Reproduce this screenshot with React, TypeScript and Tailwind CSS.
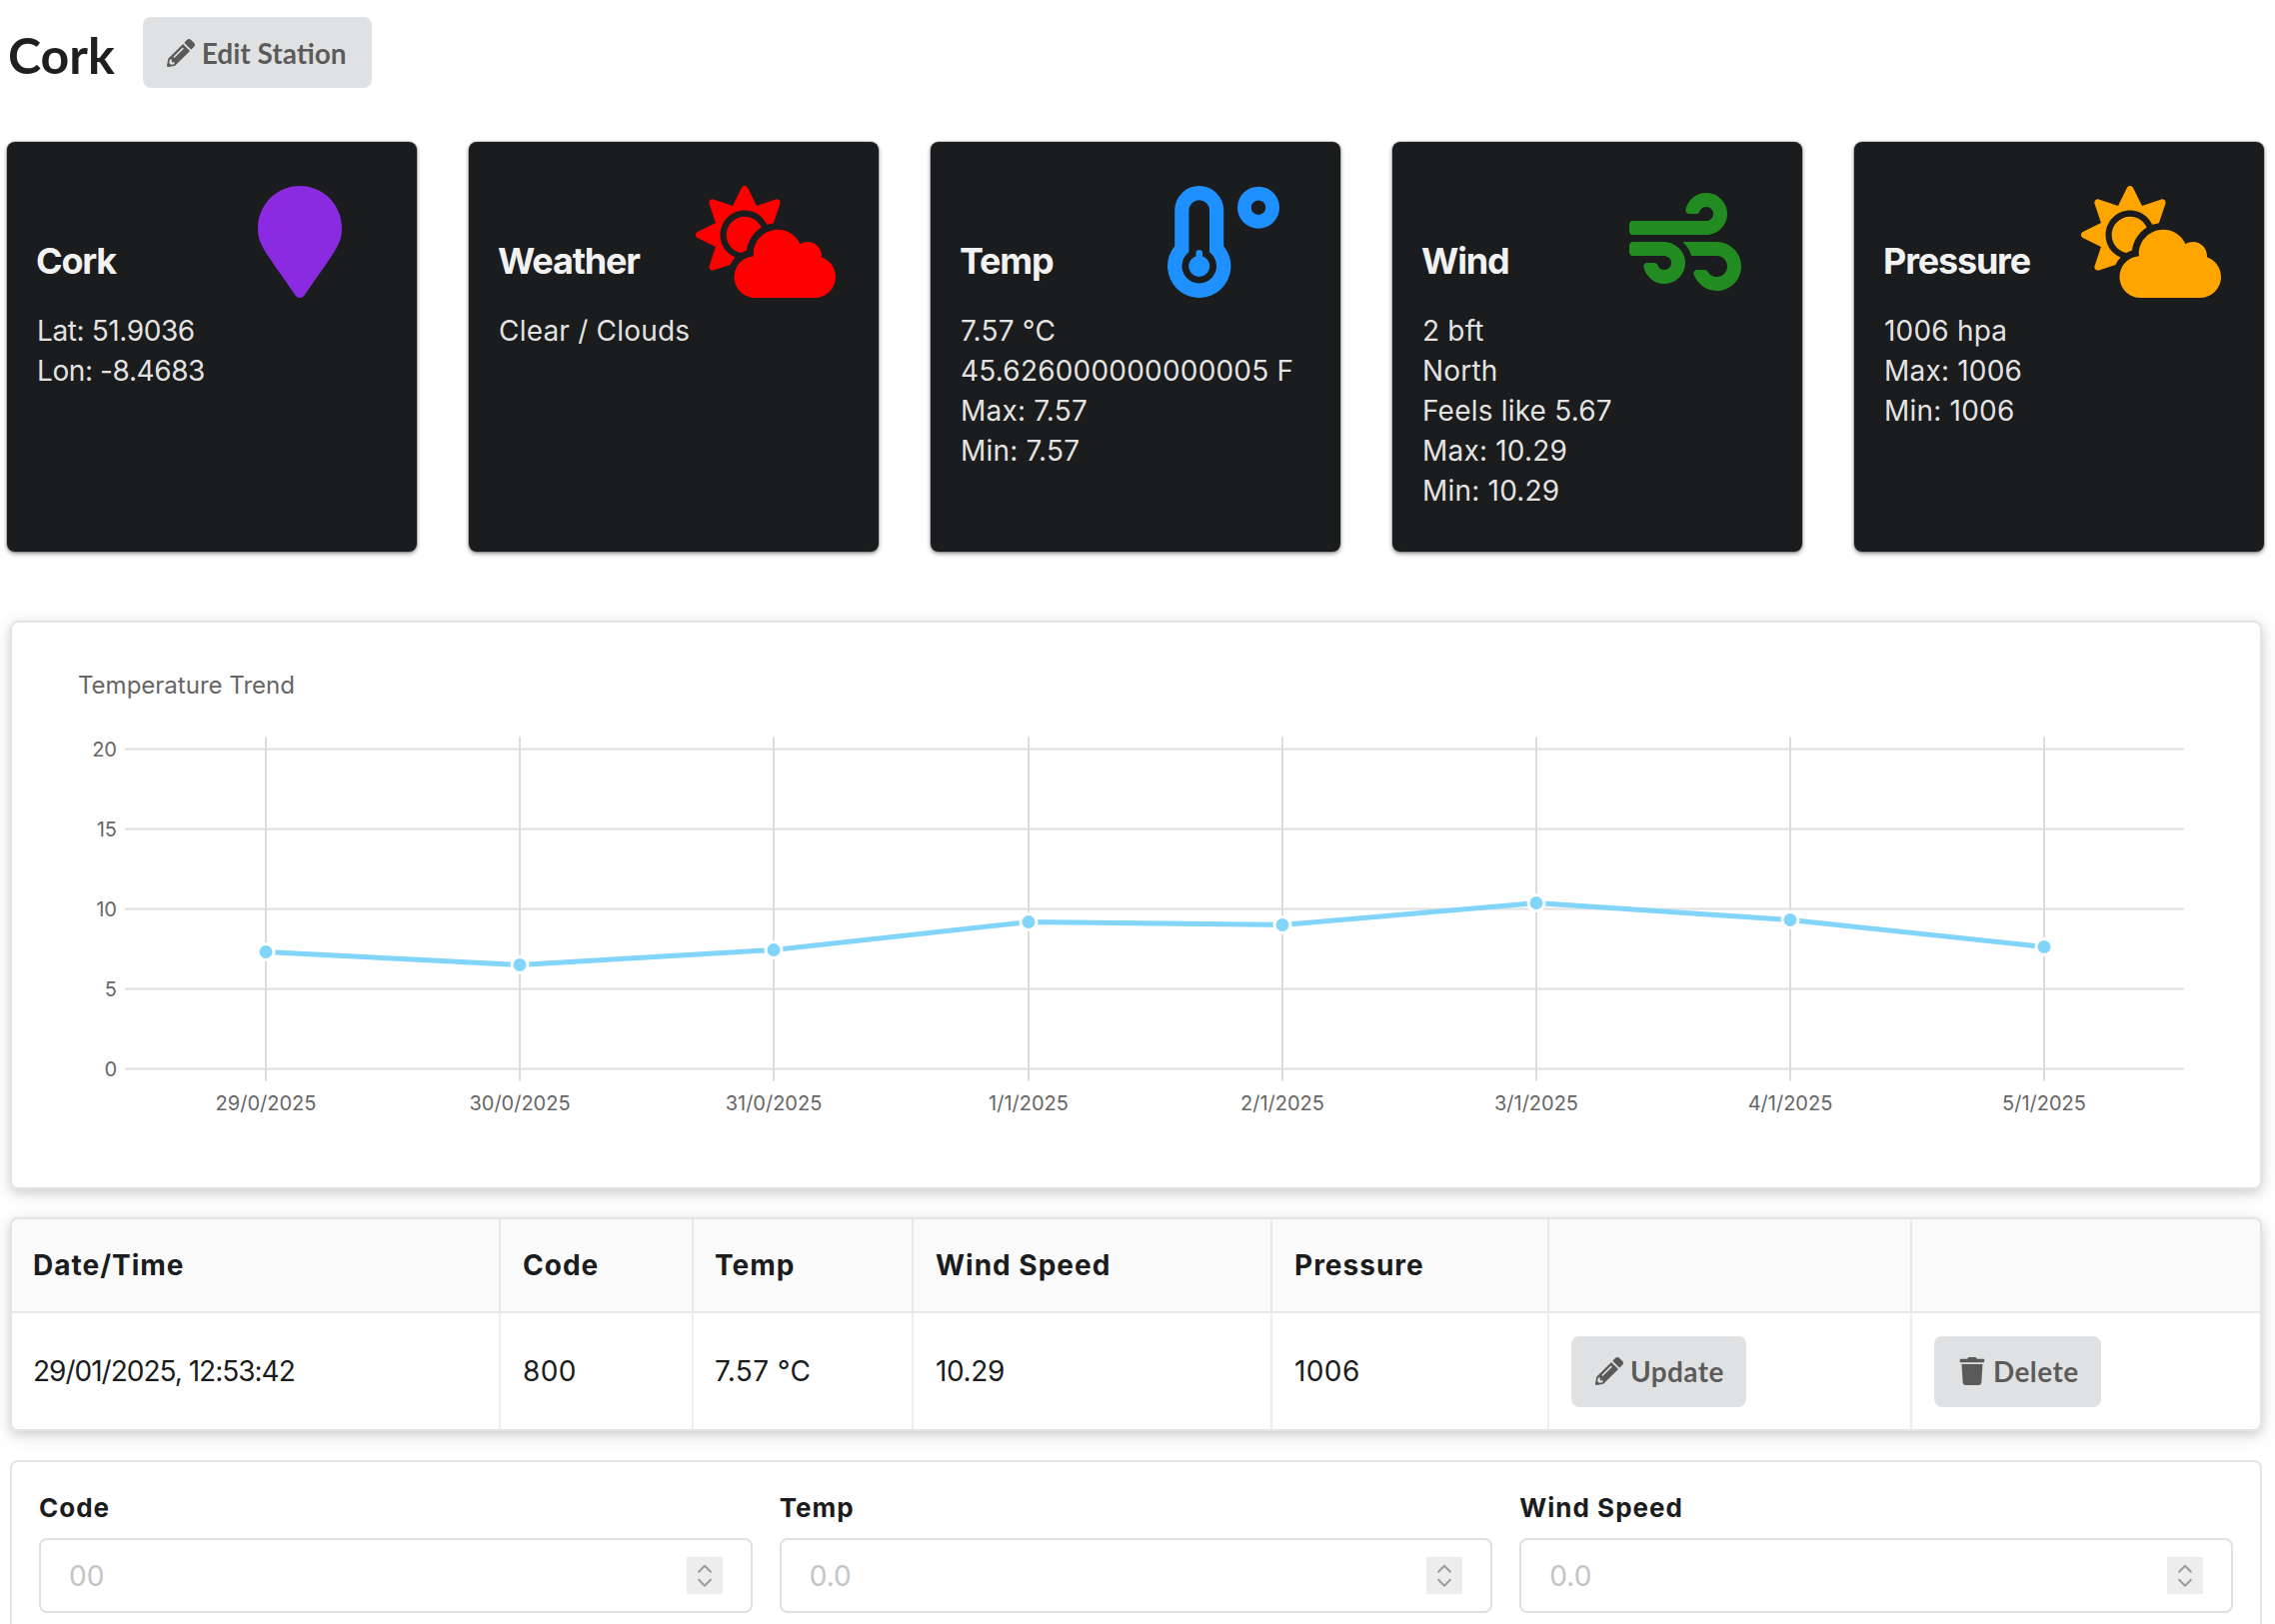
import { ChevronDown, ChevronUp } from 'lucide-react'
import type { ReactNode } from 'react'
import { FaCloudSun, FaMapMarker, FaPencilAlt, FaTrash, FaWind } from 'react-icons/fa'

// thermometer with a short stem, the react-icons one runs too far up the tube
function TempIcon({ className }: { className?: string }) {
  return (
    <svg viewBox="0 0 512 512" fill="currentColor" className={className}>
      <path
        fillRule="evenodd"
        d="M33 112A112 112 0 0 1 257 112V275A145 145 0 1 1 33 275ZM98 112V303A79 79 0 1 0 192 303V112A47 47 0 0 0 98 112Z"
      />
      <path d="M130 307A15 15 0 0 1 160 307V322A48 48 0 1 1 130 322Z" />
      <path
        fillRule="evenodd"
        d="M416 3A96 96 0 1 1 416 195A96 96 0 1 1 416 3ZM416 66A33 33 0 1 0 416 132A33 33 0 1 0 416 66Z"
      />
    </svg>
  )
}

const cards = [
  {
    title: 'Cork',
    icon: FaMapMarker,
    color: 'mr-[4px] text-[#8a2be2]',
    text: 'tracking-[-0.4px]',
    lines: ['Lat: 51.9036', 'Lon: -8.4683'],
  },
  { title: 'Weather', icon: FaCloudSun, color: 'text-[#ff0000]', text: 'tracking-[0.2px]', lines: ['Clear / Clouds'] },
  {
    title: 'Temp',
    icon: TempIcon,
    color: 'mr-[4px] text-[#1e90ff]',
    text: 'tracking-[0.2px]',
    lines: ['7.57 °C', '45.626000000000005 F', 'Max: 7.57', 'Min: 7.57'],
  },
  {
    title: 'Wind',
    icon: FaWind,
    color: 'mr-[4px] text-[#228b22]',
    text: 'tracking-[0.2px]',
    lines: ['2 bft', 'North', 'Feels like 5.67', 'Max: 10.29', 'Min: 10.29'],
  },
  {
    title: 'Pressure',
    icon: FaCloudSun,
    color: 'text-[#ffa500]',
    text: 'tracking-[0.2px]',
    lines: ['1006 hpa', 'Max: 1006', 'Min: 1006'],
  },
]

const yTicks = [
  { label: '20', y: 128 },
  { label: '15', y: 208 },
  { label: '10', y: 288 },
  { label: '5', y: 368 },
  { label: '0', y: 448 },
]

const points = [
  { date: '29/0/2025', x: 256, y: 331 },
  { date: '30/0/2025', x: 510, y: 344 },
  { date: '31/0/2025', x: 764, y: 329 },
  { date: '1/1/2025', x: 1019, y: 301 },
  { date: '2/1/2025', x: 1273, y: 304 },
  { date: '3/1/2025', x: 1527, y: 282 },
  { date: '4/1/2025', x: 1781, y: 299 },
  { date: '5/1/2025', x: 2035, y: 326 },
]

function Button({ icon, pad = 'pr-[22px]', children }: { icon: ReactNode; pad?: string; children: ReactNode }) {
  return (
    <button
      className={`inline-flex h-[71px] items-center gap-[7px] rounded-lg bg-[#e0e1e2] pl-[24px] font-['Lato',sans-serif] text-[28px] font-bold text-[#00000099] ${pad}`}
    >
      {icon}
      {children}
    </button>
  )
}

function NumberField({ label, placeholder }: { label: string; placeholder: string }) {
  return (
    <div className="flex-1">
      <label className="mb-[12px] block text-[26px] leading-[36px] font-bold tracking-[1px] text-[#1b1c1d]">{label}</label>
      <div className="flex h-[75px] items-center rounded-lg border-2 border-[#e0e0e0] pr-[28px] pl-[28px]">
        <input
          placeholder={placeholder}
          className="min-w-0 flex-1 bg-transparent text-[28px] outline-none placeholder:text-[#c4c4c4]"
        />
        <div className="flex h-[37px] w-[36px] flex-col items-center justify-center bg-[#ededed] text-[#9a9a9a]">
          <ChevronUp size={28} strokeWidth={2} className="-mb-[5px]" />
          <ChevronDown size={28} strokeWidth={2} className="-mt-[5px]" />
        </div>
      </div>
    </div>
  )
}

export default function App() {
  return (
    <div className="h-[1625px] overflow-hidden bg-white font-['Inter',sans-serif] text-[#1b1c1d]">
      <div className="flex items-center gap-[28px] pt-[17px] pl-[8px]">
        <h1 className="pt-[6px] font-['Lato',sans-serif] text-[50px] leading-[65px] font-bold text-[#1f1f1f]">Cork</h1>
        <Button pad="pr-[25px]" icon={<FaPencilAlt className="h-[28px] w-[28px]" />}>
          Edit Station
        </Button>
      </div>

      <div className="mt-[54px] flex gap-[52px] pl-[7px]">
        {cards.map((card) => (
          <div
            key={card.title}
            className="h-[410px] w-[410px] rounded-lg bg-[#1b1c1d] pt-[42px] pr-[43px] pl-[29px] text-white shadow-[0_2px_4px_rgba(34,36,38,0.5),0_0_0_1px_#d4d4d5]"
          >
            <div className="flex h-[114px] items-end justify-between">
              <h3 className="mb-[14px] text-[36px] leading-[46px] font-bold tracking-[-1.2px] text-[#f2f2f2]">{card.title}</h3>
              <card.icon className={`h-[112px] w-[140px] ${card.color}`} />
            </div>
            <div className={`mt-[13px] pl-[1px] text-[28px] leading-[40px] text-[#ffffffe6] ${card.text}`}>
              {card.lines.map((line) => (
                <div key={line}>{line}</div>
              ))}
            </div>
          </div>
        ))}
      </div>

      <div className="mt-[69px] mr-[13px] ml-[10px] h-[569px] rounded-lg border-2 border-[#e4e4e5] shadow-[0_4px_8px_rgba(34,36,38,0.12),0_4px_20px_rgba(34,36,38,0.12)]">
        <svg viewBox="2 1.5 2249 565" className="h-[565px] w-[2249px] font-['Inter',sans-serif]">
          <text x="68" y="72" fontSize="24" fill="#666">
            Temperature Trend
          </text>
          {yTicks.map((t) => (
            <g key={t.label}>
              <line x1="115" x2="2175" y1={t.y} y2={t.y} stroke="#e0e0e0" strokeWidth="2" />
              <text x="107" y={t.y + 7} fontSize="20" fill="#666" textAnchor="end">
                {t.label}
              </text>
            </g>
          ))}
          {points.map((p) => (
            <g key={p.date}>
              <line x1={p.x} x2={p.x} y1="116" y2="460" stroke="#dcdcdc" strokeWidth="2" />
              <text x={p.x} y="489" fontSize="20" fill="#666" textAnchor="middle">
                {p.date}
              </text>
            </g>
          ))}
          <polyline
            points={points.map((p) => `${p.x},${p.y}`).join(' ')}
            fill="none"
            stroke="#81d4fa"
            strokeWidth="5"
          />
          {points.map((p) => (
            <circle key={p.x} cx={p.x} cy={p.y} r="8" fill="#81d4fa" stroke="#fff" strokeWidth="3" />
          ))}
        </svg>
      </div>

      <div className="mt-[28px] mr-[13px] ml-[10px] overflow-hidden rounded-lg border-2 border-[#e4e4e5] shadow-[0_4px_8px_rgba(34,36,38,0.12),0_4px_20px_rgba(34,36,38,0.12)]">
        <table className="w-full table-fixed border-collapse text-left text-[28px] tracking-[0.4px]">
          <thead>
            <tr className="h-[93px] border-b-2 border-[#e8e8e8] bg-[#fafafa] tracking-[1px]">
              <th className="w-[488px] pl-[21px] font-bold">Date/Time</th>
              <th className="w-[193px] border-l-2 border-[#e8e8e8] pl-[22px] font-bold">Code</th>
              <th className="w-[220px] border-l-2 border-[#e8e8e8] pl-[21px] font-bold">Temp</th>
              <th className="w-[359px] border-l-2 border-[#e8e8e8] pl-[22px] font-bold">Wind Speed</th>
              <th className="w-[277px] border-l-2 border-[#e8e8e8] pl-[22px] font-bold">Pressure</th>
              <th className="w-[363px] border-l-2 border-[#e8e8e8]" />
              <th className="border-l-2 border-[#e8e8e8]" />
            </tr>
          </thead>
          <tbody>
            <tr className="h-[117px]">
              <td className="pl-[21px] tracking-[-1px]">29/01/2025, 12:53:42</td>
              <td className="border-l-2 border-[#eeeeee] pl-[22px]">800</td>
              <td className="border-l-2 border-[#eeeeee] pl-[21px]">7.57 °C</td>
              <td className="border-l-2 border-[#eeeeee] pl-[22px] tracking-[-0.4px]">10.29</td>
              <td className="border-l-2 border-[#eeeeee] pl-[22px]">1006</td>
              <td className="border-l-2 border-[#eeeeee] pl-[22px]">
                <Button icon={<FaPencilAlt className="h-[28px] w-[28px]" />}>Update</Button>
              </td>
              <td className="border-l-2 border-[#eeeeee] pl-[22px]">
                <Button icon={<FaTrash className="h-[28px] w-[28px]" />}>Delete</Button>
              </td>
            </tr>
          </tbody>
        </table>
      </div>

      <div className="mt-[29px] mr-[13px] ml-[10px] rounded-lg border-2 border-[#e4e4e5] px-[27px] pt-[28px] pb-[30px]">
        <div className="flex gap-[27px]">
          <NumberField label="Code" placeholder="00" />
          <NumberField label="Temp" placeholder="0.0" />
          <NumberField label="Wind Speed" placeholder="0.0" />
        </div>
      </div>
    </div>
  )
}
